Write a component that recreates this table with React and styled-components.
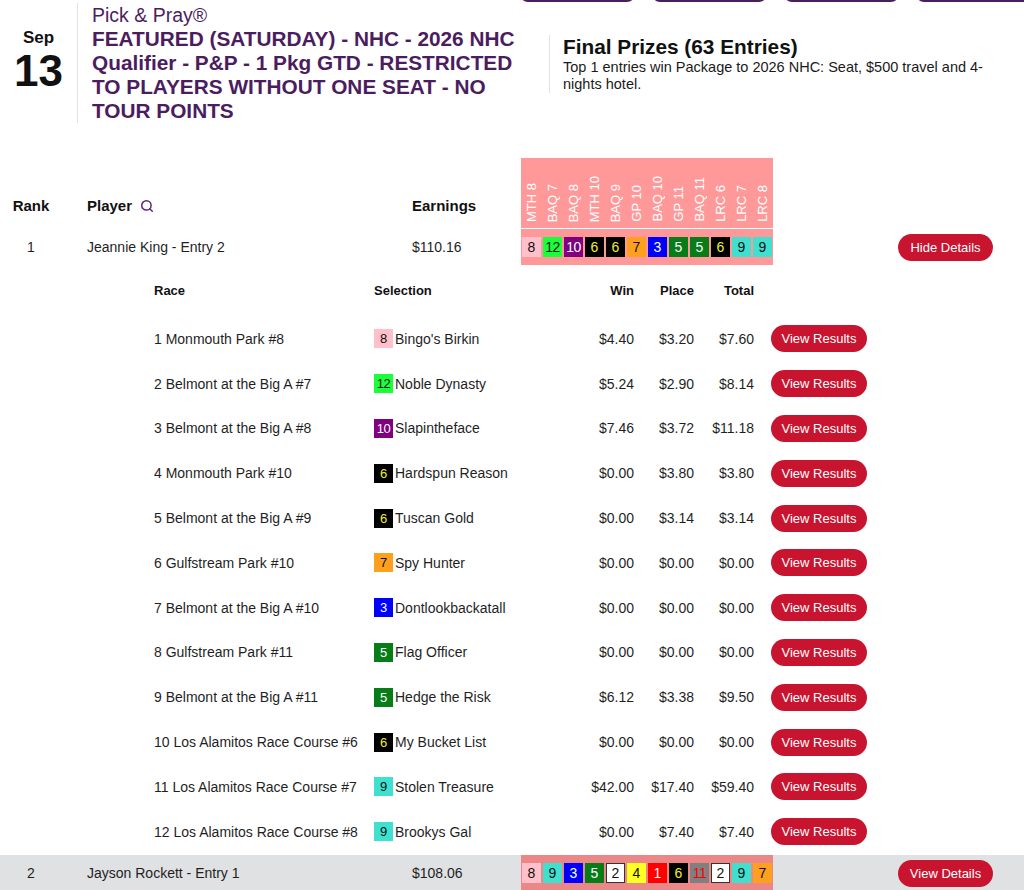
import React from 'react';
import styled, { createGlobalStyle } from 'styled-components';
import { Search } from 'lucide-react';

const GlobalStyle = createGlobalStyle`
    body {
        margin: 0;
        font-family: "Liberation Sans", Arial, sans-serif;
        color: #1f1f1f;
        background: #fff;
        overflow-x: hidden;
    }
`

const PURPLE = '#4b1d5f';
const RED = '#c8142f';

const saddle = {
    1: { bg: '#ff0000', fg: '#fff' },
    2: { bg: '#fff', fg: '#111', border: '#333' },
    3: { bg: '#0000ff', fg: '#fff' },
    4: { bg: '#ffff22', fg: '#111' },
    5: { bg: '#067d17', fg: '#fff' },
    6: { bg: '#000', fg: '#f0f028' },
    7: { bg: '#ff9f1e', fg: '#111' },
    8: { bg: '#ffc0cb', fg: '#111' },
    9: { bg: '#40e0d0', fg: '#111' },
    10: { bg: '#800080', fg: '#fff' },
    11: { bg: '#808080', fg: '#ff0000' },
    12: { bg: '#1aff3a', fg: '#111' },
};

const races = ['MTH 8', 'BAQ 7', 'BAQ 8', 'MTH 10', 'BAQ 9', 'GP 10', 'BAQ 10', 'GP 11', 'BAQ 11', 'LRC 6', 'LRC 7', 'LRC 8'];

const Page = styled.div`
    width: 1024px;
    overflow: hidden;
`

const Tabs = styled.div`
    display: flex;
    gap: 17px;
    padding-left: 520px;
    height: 3px;
    overflow: hidden;
`

const Tab = styled.div`
    flex: 0 0 115px;
    height: 40px;
    margin-top: -38px;
    box-sizing: border-box;
    border: 2px solid ${PURPLE};
    border-radius: 8px;
`

const EventHeader = styled.div`
    display: grid;
    grid-template-columns: 78px 471px 1fr;
`

const DateBox = styled.div`
    display: flex;
    flex-direction: column;
    align-items: center;
    padding-top: 25px;
    border-right: 1px solid #e2e2e2;
    font-weight: bold;
    color: #111;
`

const Month = styled.div`
    font-size: 17px;
    line-height: 20px;
`

const Day = styled.div`
    font-size: 44px;
    line-height: 46px;
`

const TitleBox = styled.div`
    padding-left: 14px;
    width: 440px;
    color: ${PURPLE};
    font-size: 20.8px;
    line-height: 24px;
`

const Brand = styled.div`
    font-weight: normal;
    font-size: 19.5px;
`

const EventName = styled.div`
    font-weight: bold;
`

const Prizes = styled.div`
    align-self: start;
    margin-top: 32px;
    padding-left: 13px;
    border-left: 1px solid #e2e2e2;
    width: 440px;
`

const PrizeTitle = styled.div`
    font-size: 20.8px;
    line-height: 24px;
    font-weight: bold;
    color: #111;
`

const PrizeText = styled.div`
    font-size: 14.5px;
    line-height: 17px;
    color: #1a1a1a;
`

const Board = styled.div`
    margin-top: 35px;
`

const Row = styled.div`
    display: grid;
    grid-template-columns: 62px 350px 109px 252px 1fr;
    align-items: ${p => (p.$head ? 'end' : 'center')};
    font-size: ${p => (p.$head ? '15px' : '14px')};
    font-weight: ${p => (p.$head ? 'bold' : 'normal')};
    color: ${p => (p.$head ? '#111' : '#1f1f1f')};
    background: ${p => (p.$shaded ? '#e0e1e3' : 'transparent')};
    margin-bottom: ${p => (p.$head ? '1px' : '0')};
`

const Rank = styled.div`
    text-align: center;
    padding-bottom: ${p => (p.$head ? '14px' : '0')};
`

const Player = styled.div`
    padding-left: 25px;
    display: flex;
    align-items: center;
    gap: 8px;
    padding-bottom: ${p => (p.$head ? '14px' : '0')};
`

const Earnings = styled.div`
    padding-bottom: ${p => (p.$head ? '14px' : '0')};
`

const RaceStrip = styled.div`
    display: flex;
    align-self: stretch;
    align-items: ${p => (p.$head ? 'flex-end' : 'center')};
    height: ${p => (p.$head ? '70px' : '36px')};
    background: rgba(255, 0, 0, 0.4);
`

const RaceLabel = styled.div`
    width: 21px;
    display: flex;
    justify-content: center;
    padding-bottom: 6px;
    span {
        writing-mode: vertical-rl;
        transform: rotate(180deg);
        color: #fff;
        font-size: 13px;
        font-weight: normal;
        line-height: 21px;
        white-space: nowrap;
    }
`

const Pick = styled.div`
    width: 21px;
    display: flex;
    justify-content: center;
`

const Badge = styled.span`
    display: inline-flex;
    align-items: center;
    justify-content: center;
    box-sizing: border-box;
    width: 19px;
    height: ${p => (p.$tall ? '20px' : '19px')};
    background: ${p => saddle[p.$n].bg};
    color: ${p => saddle[p.$n].fg};
    border: ${p => (saddle[p.$n].border ? `1px solid ${saddle[p.$n].border}` : 'none')};
    font-size: ${p => (p.$tall ? '14px' : '13px')};
    letter-spacing: ${p => (p.$n >= 10 ? '-0.6px' : '0')};
`

const ActionCell = styled.div`
    display: flex;
    justify-content: flex-end;
    padding-right: 31px;
`

const PillButton = styled.button`
    background: ${RED};
    color: #fff;
    border: none;
    border-radius: 14px;
    font-family: "Liberation Sans", Arial, sans-serif;
    font-size: 13px;
    height: 27px;
    width: ${p => p.$w || '96px'};
    padding: 0;
    cursor: pointer;
`

const Details = styled.div`
    padding: 0 0 1px 154px;
`

const DetailRow = styled.div`
    display: grid;
    grid-template-columns: 220px 200px 60px 60px 60px 113px;
    align-items: center;
    height: ${p => (p.$head ? '51.5px' : '44.8px')};
    font-size: ${p => (p.$head ? '13px' : '14px')};
    font-weight: ${p => (p.$head ? 'bold' : 'normal')};
    color: ${p => (p.$head ? '#111' : '#1f1f1f')};
`

const Num = styled.div`
    text-align: right;
`

const Selection = styled.div`
    display: flex;
    align-items: center;
    gap: 2px;
`

const ButtonCell = styled.div`
    display: flex;
    justify-content: flex-end;
`

const legs = [
    ['1 Monmouth Park #8', 8, "Bingo's Birkin", '$4.40', '$3.20', '$7.60'],
    ['2 Belmont at the Big A #7', 12, 'Noble Dynasty', '$5.24', '$2.90', '$8.14'],
    ['3 Belmont at the Big A #8', 10, 'Slapintheface', '$7.46', '$3.72', '$11.18'],
    ['4 Monmouth Park #10', 6, 'Hardspun Reason', '$0.00', '$3.80', '$3.80'],
    ['5 Belmont at the Big A #9', 6, 'Tuscan Gold', '$0.00', '$3.14', '$3.14'],
    ['6 Gulfstream Park #10', 7, 'Spy Hunter', '$0.00', '$0.00', '$0.00'],
    ['7 Belmont at the Big A #10', 3, 'Dontlookbackatall', '$0.00', '$0.00', '$0.00'],
    ['8 Gulfstream Park #11', 5, 'Flag Officer', '$0.00', '$0.00', '$0.00'],
    ['9 Belmont at the Big A #11', 5, 'Hedge the Risk', '$6.12', '$3.38', '$9.50'],
    ['10 Los Alamitos Race Course #6', 6, 'My Bucket List', '$0.00', '$0.00', '$0.00'],
    ['11 Los Alamitos Race Course #7', 9, 'Stolen Treasure', '$42.00', '$17.40', '$59.40'],
    ['12 Los Alamitos Race Course #8', 9, 'Brookys Gal', '$0.00', '$7.40', '$7.40'],
];

const players = [
    { rank: 1, name: 'Jeannie King - Entry 2', earnings: '$110.16', picks: [8, 12, 10, 6, 6, 7, 3, 5, 5, 6, 9, 9], open: true },
    { rank: 2, name: 'Jayson Rockett - Entry 1', earnings: '$108.06', picks: [8, 9, 3, 5, 2, 4, 1, 6, 11, 2, 9, 7], open: false },
];

function PlayerRow({ player, shaded }) {
    return (
        <Row $shaded={shaded}>
            <Rank>{player.rank}</Rank>
            <Player>{player.name}</Player>
            <Earnings>{player.earnings}</Earnings>
            <RaceStrip>
                {player.picks.map((n, i) => (
                    <Pick key={i}><Badge $n={n} $tall>{n}</Badge></Pick>
                ))}
            </RaceStrip>
            <ActionCell>
                <PillButton $w="95px">{player.open ? 'Hide Details' : 'View Details'}</PillButton>
            </ActionCell>
        </Row>
    );
}

function App() {
    return (
        <>
            <GlobalStyle />
            <Page>
                <Tabs>
                    <Tab /><Tab /><Tab /><Tab />
                </Tabs>
                <EventHeader>
                    <DateBox>
                        <Month>Sep</Month>
                        <Day>13</Day>
                    </DateBox>
                    <TitleBox>
                        <Brand>Pick &amp; Pray®</Brand>
                        <EventName>FEATURED (SATURDAY) - NHC - 2026 NHC Qualifier - P&amp;P - 1 Pkg GTD - RESTRICTED TO PLAYERS WITHOUT ONE SEAT - NO TOUR POINTS</EventName>
                    </TitleBox>
                    <Prizes>
                        <PrizeTitle>Final Prizes (63 Entries)</PrizeTitle>
                        <PrizeText>Top 1 entries win Package to 2026 NHC: Seat, $500 travel and 4-nights hotel.</PrizeText>
                    </Prizes>
                </EventHeader>

                <Board>
                    <Row $head>
                        <Rank $head>Rank</Rank>
                        <Player $head>Player <Search size={14} strokeWidth={2.6} color="#5b2a7a" /></Player>
                        <Earnings $head>Earnings</Earnings>
                        <RaceStrip $head>
                            {races.map(r => (
                                <RaceLabel key={r}><span>{r}</span></RaceLabel>
                            ))}
                        </RaceStrip>
                        <div />
                    </Row>

                    <PlayerRow player={players[0]} />

                    <Details>
                        <DetailRow $head>
                            <div>Race</div>
                            <div>Selection</div>
                            <Num>Win</Num>
                            <Num>Place</Num>
                            <Num>Total</Num>
                            <div />
                        </DetailRow>
                        {legs.map(([race, n, horse, win, place, total]) => (
                            <DetailRow key={race}>
                                <div>{race}</div>
                                <Selection><Badge $n={n}>{n}</Badge>{horse}</Selection>
                                <Num>{win}</Num>
                                <Num>{place}</Num>
                                <Num>{total}</Num>
                                <ButtonCell><PillButton>View Results</PillButton></ButtonCell>
                            </DetailRow>
                        ))}
                    </Details>

                    <PlayerRow player={players[1]} shaded />
                </Board>
            </Page>
        </>
    );
}

export default App;
